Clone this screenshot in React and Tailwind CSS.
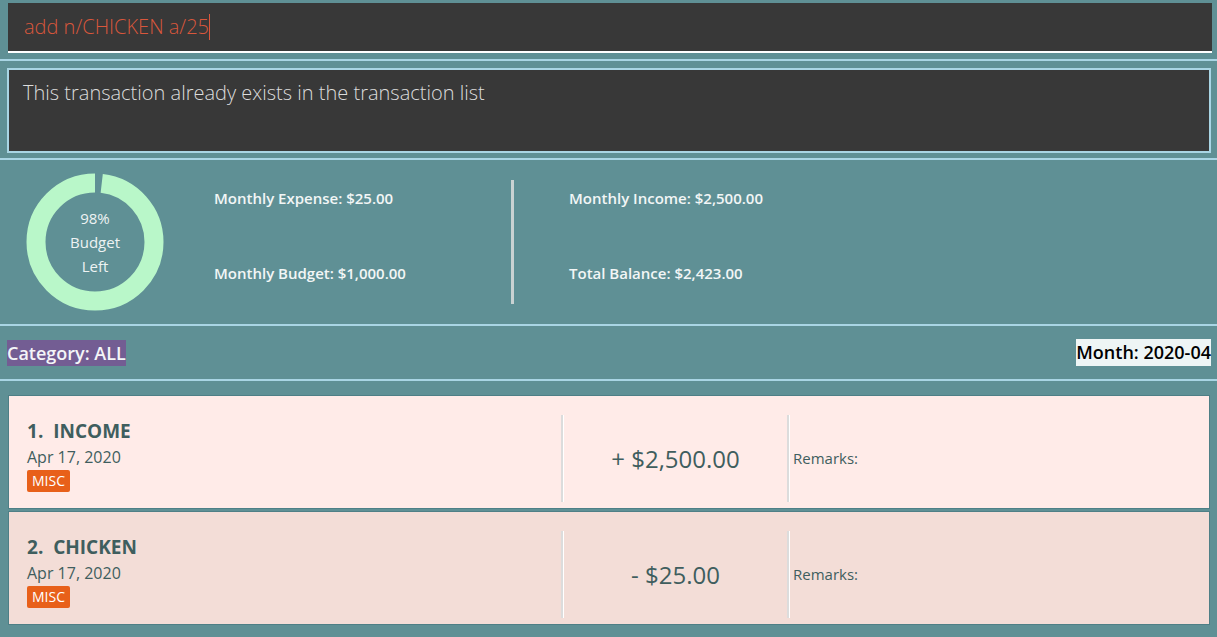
import React from 'react';

const font = { fontFamily: '"Open Sans", "Noto Sans", sans-serif' };

const Sep = () => <div className="h-[2px] w-full bg-[#a9d5e4]" />;

const Donut = () => {
    const r = 59;
    const c = 2 * Math.PI * r;
    const left = 0.98;
    return (
        <div className="relative w-[140px] h-[140px]">
            <svg width="140" height="140" viewBox="0 0 140 140">
                <circle
                    cx="70"
                    cy="70"
                    r={r}
                    fill="none"
                    stroke="#b9f7c9"
                    strokeWidth="19"
                    strokeDasharray={`${c * left} ${c}`}
                    transform="rotate(-90 70 70) scale(1 -1) translate(0 -140)"
                />
            </svg>
            <div className="absolute inset-0 flex flex-col items-center justify-center text-[15px] leading-[24px] text-[#eef3f3]">
                <span>98%</span>
                <span>Budget</span>
                <span>Left</span>
            </div>
        </div>
    );
};

const Divider = () => (
    <div className="h-full w-[3px] border-l-2 border-[#dcdcdc] bg-white" />
);

const Card = ({ idx, name, date, amount, bg }) => (
    <div className={`h-[114px] border border-[#4e7f86] ${bg} flex`}>
        <div className="w-[552px] pl-[18px] pt-[22px] text-[#3f5e5e]">
            <div className="text-[19px] font-bold leading-[26px]">{idx}.&nbsp; {name}</div>
            <div className="text-[16px] leading-[22px] mt-[2px]">{date}</div>
            <span className="inline-block mt-[1px] bg-[#e8601a] text-white text-[14px] leading-[22px] px-[5px] rounded-[2px]">MISC</span>
        </div>
        <div className="flex-1 flex pt-[19px] pb-[6px]">
            <Divider />
            <div className="w-[223px] flex items-center justify-center text-[24px] text-[#3f5e5e]">
                {amount}
            </div>
            <Divider />
            <div className="flex items-center pl-[3px] text-[15px] text-[#3f5e5e]">Remarks:</div>
        </div>
    </div>
);

export default function App() {
    return (
        <div className="w-full h-[637px] bg-[#5f9095] overflow-hidden" style={font}>
            <div className="pt-[3px] pl-[8px] pr-[5px]">
                <div className="h-[50px] bg-[#383838] border-b-2 border-white flex items-center pl-[16px]">
                    <span className="text-[20px] font-light text-[#d9573c] leading-[26px]">add n/CHICKEN a/25</span>
                    <span className="w-[1px] h-[26px] bg-[#d9573c]" />
                </div>
            </div>
            <div className="h-[6px]" />
            <Sep />
            <div className="pt-[7px] pl-[7px] pr-[6px]">
                <div className="h-[85px] bg-[#383838] border-2 border-[#a9d5e4] pl-[14px] pt-[9px]">
                    <span className="text-[20px] font-light text-[#dcdcdc] leading-[28px]">This transaction already exists in the transaction list</span>
                </div>
            </div>
            <div className="h-[5px]" />
            <Sep />
            <div className="h-[164px] flex items-center">
                <div className="pl-[25px] w-[214px]">
                    <Donut />
                </div>
                <div className="w-[297px] h-[124px] flex flex-col justify-center gap-[54px] text-[15px] font-semibold text-[#f2f6f6] leading-[21px] pb-[12px]">
                    <span>Monthly Expense: $25.00</span>
                    <span>Monthly Budget: $1,000.00</span>
                </div>
                <div className="w-[3px] h-[124px] bg-[#c9d2d2]" />
                <div className="pl-[55px] h-[124px] flex flex-col justify-center gap-[54px] text-[15px] font-semibold text-[#f2f6f6] leading-[21px] pb-[12px]">
                    <span>Monthly Income: $2,500.00</span>
                    <span>Total Balance: $2,423.00</span>
                </div>
            </div>
            <Sep />
            <div className="h-[53px] flex items-center justify-between pl-[7px] pr-[6px]">
                <span className="bg-[#735d93] text-[#f4f6f8] text-[18px] font-semibold leading-[26px]">Category: ALL</span>
                <span className="bg-[#eef5f5] text-black text-[18px] font-semibold leading-[27px]">Month: 2020-04</span>
            </div>
            <Sep />
            <div className="pt-[14px] pl-[8px] pr-[7px] flex flex-col gap-[2px]">
                <Card idx="1" name="INCOME" date="Apr 17, 2020" amount="+ $2,500.00" bg="bg-[#ffebe8]" />
                <Card idx="2" name="CHICKEN" date="Apr 17, 2020" amount="- $25.00" bg="bg-[#f3ddd7]" />
            </div>
        </div>
    );
}
